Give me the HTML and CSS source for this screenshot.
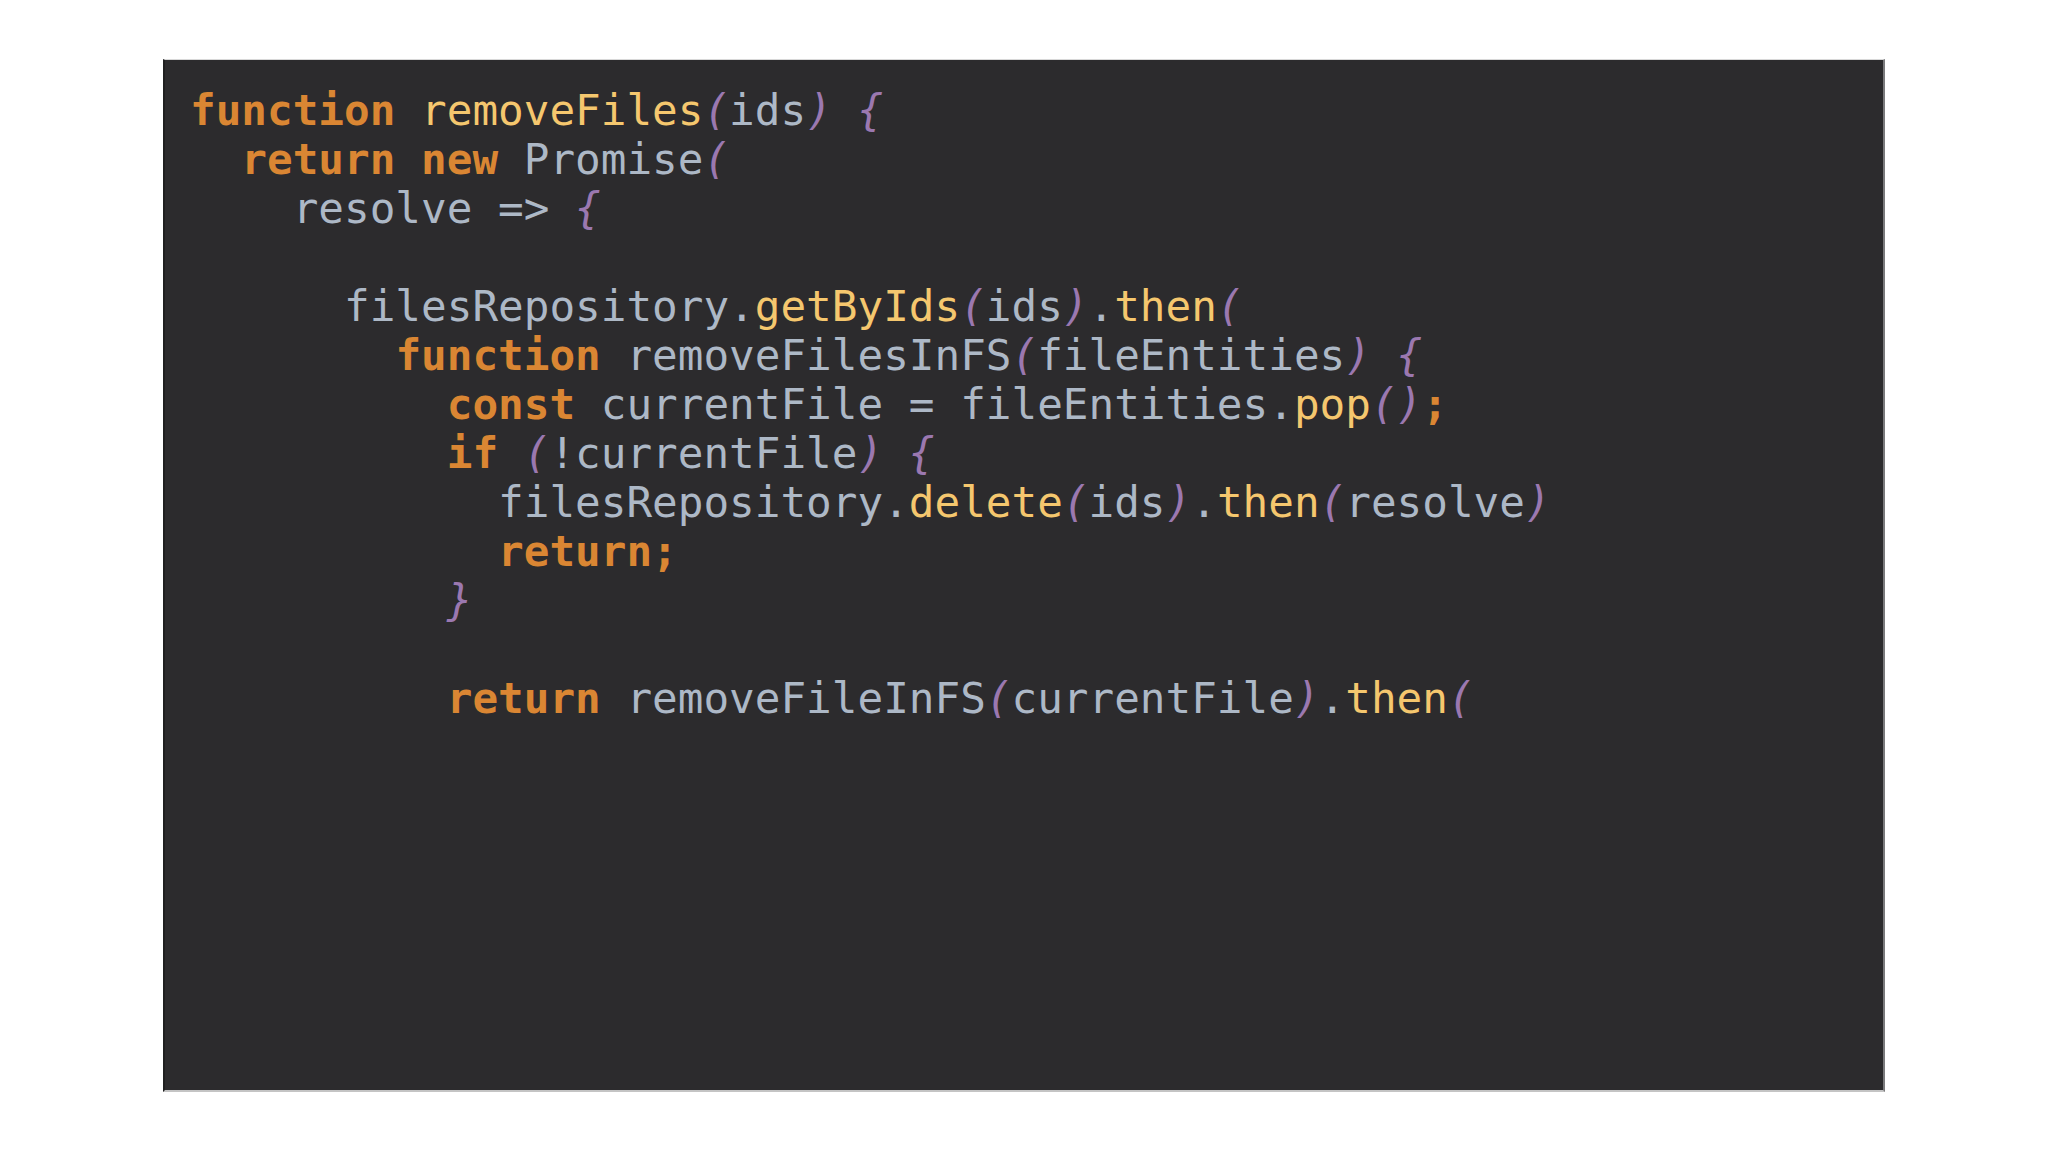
FILE: index.html
```html
<!DOCTYPE html>
<html>
<head>
<meta charset="utf-8">
<link rel="stylesheet" href="styles.css">
</head>
<body>
<div class="slide">
<pre class="code"><span class="kw">function</span> <span class="fn">removeFiles</span><span class="p">(</span>ids<span class="p">)</span> <span class="p">{</span>
  <span class="kw">return</span> <span class="kw">new</span> Promise<span class="p">(</span>
    resolve =&gt; <span class="p">{</span>

      filesRepository.<span class="fn">getByIds</span><span class="p">(</span>ids<span class="p">)</span>.<span class="fn">then</span><span class="p">(</span>
        <span class="kw">function</span> removeFilesInFS<span class="p">(</span>fileEntities<span class="p">)</span> <span class="p">{</span>
          <span class="kw">const</span> currentFile = fileEntities.<span class="fn">pop</span><span class="p">()</span><span class="kw">;</span>
          <span class="kw">if</span> <span class="p">(</span>!currentFile<span class="p">)</span> <span class="p">{</span>
            filesRepository.<span class="fn">delete</span><span class="p">(</span>ids<span class="p">)</span>.<span class="fn">then</span><span class="p">(</span>resolve<span class="p">)</span>
            <span class="kw">return;</span>
          <span class="p">}</span>

          <span class="kw">return</span> removeFileInFS<span class="p">(</span>currentFile<span class="p">)</span>.<span class="fn">then</span><span class="p">(</span></pre>
</div>
</body>
</html>
```
FILE: styles.css
```css
html, body {
  margin: 0;
  padding: 0;
  background: #ffffff;
}
body {
  padding: 59px 0 0 163px;
  height: 1152px;
  box-sizing: border-box;
}
.slide {
  width: 1722px;
  height: 1033px;
  box-sizing: border-box;
  background: #2c2b2d;
  border-top: 1px solid #d8d8d8;
  border-right: 2px solid #7a7a7c;
  border-bottom: 2px solid #c4c4c4;
  border-left: 2px solid #1f1f20;
  padding: 26px 0 0 25px;
}
.code {
  margin: 0;
  font-family: "DejaVu Sans Mono", monospace;
  font-size: 42.65px;
  line-height: 49px;
  color: #adb8c6;
}
.kw {
  color: #da8633;
  font-weight: bold;
}
.fn {
  color: #f5c76e;
}
.p {
  color: #9b78b0;
  font-style: italic;
}
```
